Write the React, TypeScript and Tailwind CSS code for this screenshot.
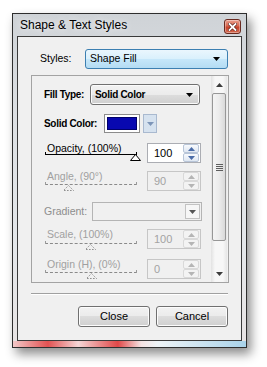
import React from "react";

const F = "font-['Liberation_Sans',Arial,sans-serif]";

function Tri({ up, color, w = 7, h = 4 }: { up?: boolean; color: string; w?: number; h?: number }) {
  return (
    <svg width={w} height={h} viewBox={`0 0 ${w} ${h}`}>
      <path d={up ? `M0 ${h} L${w / 2} 0 L${w} ${h} Z` : `M0 0 L${w / 2} ${h} L${w} 0 Z`} fill={color} />
    </svg>
  );
}

function SpinArrow({ up, disabled }: { up?: boolean; disabled?: boolean }) {
  return (
    <div
      className={`flex h-[9px] w-[16px] items-center justify-center rounded-[2px] border ${
        disabled ? "border-[#d9d9d9] bg-[#f3f3f3]" : "border-[#b8c5d8] bg-[linear-gradient(#f8fafd,#dfe7f2)]"
      }`}
    >
      <Tri up={up} color={disabled ? "#b5b5b5" : "#4a6ca8"} w={7} h={4} />
    </div>
  );
}

function SpinBox({ value, disabled }: { value: string; disabled?: boolean }) {
  return (
    <div
      className={`flex h-[20px] w-[54px] items-center border ${
        disabled ? "border-[#c6c6c6] bg-[#f0f0f0]" : "border-[#abadb3] bg-white"
      }`}
    >
      <div className={`flex-1 pl-[6px] text-[11px] leading-[11px] ${disabled ? "text-[#a3a3a3]" : "text-black"}`}>
        {value}
      </div>
      <div className="flex flex-col pr-[1px]">
        <SpinArrow up disabled={disabled} />
        <SpinArrow disabled={disabled} />
      </div>
    </div>
  );
}

function SliderLabel({
  label,
  disabled,
  thumbX,
  lineGap,
}: {
  label: string;
  disabled?: boolean;
  thumbX: number;
  lineGap: number;
}) {
  return (
    <div className="relative ml-[1px] w-[92px] shrink-0 self-start">
      <div className={`whitespace-nowrap pl-[2px] text-[10.5px] leading-[11px] ${disabled ? "text-[#a0a0a0]" : "text-black"}`}>
        {label}
      </div>
      <div style={{ height: lineGap }} />
      <div className={`h-0 border-b ${disabled ? "border-dashed border-[#8a8a8a]" : "border-solid border-black"}`} />
      <div className={`absolute bottom-0 left-0 h-[3px] w-px ${disabled ? "bg-[#9a9a9a]" : "bg-black"}`} />
      <div className={`absolute bottom-0 right-0 h-[3px] w-px ${disabled ? "bg-[#9a9a9a]" : "bg-black"}`} />
      <div className="absolute top-full" style={{ left: thumbX }}>
        {disabled ? (
          <svg width="11" height="7" viewBox="0 0 11 7">
            <path d="M5.5 0.5 L10.5 5.5 L0.5 5.5 Z" fill="none" stroke="#8a8a8a" strokeWidth="1" strokeDasharray="1.5 1.5" />
          </svg>
        ) : (
          <svg width="11" height="7" viewBox="0 0 11 7" className="-mt-px">
            <path d="M5.5 0.5 L10.5 6.5 L0.5 6.5 Z" fill="#fff" stroke="#000" strokeWidth="1" />
          </svg>
        )}
      </div>
    </div>
  );
}

function WinButton({ label }: { label: string }) {
  return (
    <div className="flex h-[21px] w-[72px] items-center justify-center rounded-[3px] border border-[#707070] bg-[linear-gradient(#f2f2f2_0%,#ebebeb_50%,#dddddd_50%,#cfcfcf_100%)] text-[11px] text-black shadow-[inset_0_0_0_1px_#fcfcfc]">
      {label}
    </div>
  );
}

function Scrollbar() {
  return (
    <div className="mr-[1px] flex w-[16px] flex-col bg-[linear-gradient(to_right,#e2e2e2,#f7f7f7_25%,#f7f7f7_75%,#e6e6e6)]">
      <div className="flex h-[17px] items-center justify-center">
        <Tri up color="#3c3c3c" w={7} h={4} />
      </div>
      <div className="mx-[1px] flex h-[148px] items-center justify-center rounded-[2px] border border-[#979797] bg-[linear-gradient(to_right,#f4f4f4,#ececec_50%,#d9d9d9)]">
        <div className="flex flex-col gap-[1px]">
          <div className="h-px w-[7px] bg-[#5e5e5e]" />
          <div className="h-px w-[7px] bg-[#5e5e5e]" />
          <div className="h-px w-[7px] bg-[#5e5e5e]" />
          <div className="h-px w-[7px] bg-[#5e5e5e]" />
        </div>
      </div>
      <div className="flex-1" />
      <div className="flex h-[17px] items-center justify-center">
        <Tri color="#3c3c3c" w={7} h={4} />
      </div>
    </div>
  );
}

const BOLD = "whitespace-nowrap text-[10px] font-bold tracking-[-0.3px] text-black";

export default function App() {
  return (
    <div className={`h-[367px] w-[267px] overflow-hidden bg-white pl-[12px] pt-[13px] ${F}`}>
      <div className="flex h-[335px] w-[235px] flex-col border border-[#2e2e2e] bg-[linear-gradient(to_bottom,#cfd3d7,#dde0e3_30%,#e4e7ea_70%,#e8e4e4)] shadow-[4px_6px_10px_rgba(0,0,0,0.45)]">
        {/* title bar */}
        <div className="flex h-[22px] items-start justify-between pl-[7px] pr-[5px]">
          <div className="mt-[4px] text-[12px] leading-[15px] text-black [text-shadow:0_0_6px_#ffffff]">
            Shape &amp; Text Styles
          </div>
          <div className="mt-[5px] flex h-[15px] w-[17px] items-center justify-center rounded-[3px] border border-[#6a2a20] bg-[linear-gradient(#eaa08f_0%,#d8674f_45%,#c7422b_55%,#d46a50_100%)] shadow-[inset_0_0_0_1px_rgba(255,255,255,0.35)]">
            <svg width="9" height="8" viewBox="0 0 9 8">
              <path d="M1.5 1 L7.5 7 M7.5 1 L1.5 7" stroke="#5a2018" strokeWidth="3.2" strokeLinecap="square" />
              <path d="M1.5 1 L7.5 7 M7.5 1 L1.5 7" stroke="#ffffff" strokeWidth="1.8" strokeLinecap="square" />
            </svg>
          </div>
        </div>
        {/* client */}
        <div className="mx-[4px] flex h-[305px] flex-col border border-[#3a3a3a] bg-[#f0f0f0]">
          {/* Styles row */}
          <div className="mt-[12px] flex h-[20px] items-center pl-[22px]">
            <div className="w-[45px] shrink-0 whitespace-nowrap text-[10.5px] text-black">Styles:</div>
            <div className="flex h-[20px] w-[143px] items-center justify-between rounded-[3px] border border-[#3c7fb1] bg-[linear-gradient(#eaf6fd_0%,#d9f0fc_50%,#c6e7fa_50%,#b4dcf3_100%)] pl-[4px] pr-[7px]">
              <span className="text-[10.5px] text-black">Shape Fill</span>
              <Tri color="#000" w={7} h={4} />
            </div>
          </div>
          {/* Panel */}
          <div className="ml-[13px] mt-[6px] flex h-[208px] w-[198px] border border-[#a3a3a3]">
            <div className="flex flex-1 flex-col overflow-hidden pl-[12px]">
              {/* Fill type */}
              <div className="mt-[8px] flex h-[21px] shrink-0 items-center">
                <div className={`w-[46px] shrink-0 ${BOLD}`}>Fill Type:</div>
                <div className="flex h-[21px] w-[110px] shrink-0 items-center justify-between rounded-[3px] border border-[#707070] bg-[linear-gradient(#f2f2f2_0%,#ebebeb_50%,#dddddd_50%,#cfcfcf_100%)] pl-[4px] pr-[6px] shadow-[inset_0_0_0_1px_#fbfbfb]">
                  <span className={BOLD}>Solid Color</span>
                  <Tri color="#000" w={7} h={4} />
                </div>
              </div>
              {/* Solid color */}
              <div className="mt-[9px] flex h-[19px] shrink-0 items-center">
                <div className={`w-[60px] shrink-0 ${BOLD}`}>Solid Color:</div>
                <div className="h-[19px] w-[36px] shrink-0 border border-[#8c8c8c] bg-white p-[2px]">
                  <div className="h-full w-full border border-[#00006a] bg-[#0808b0]" />
                </div>
                <div className="ml-[3px] flex h-[19px] w-[14px] shrink-0 items-center justify-center border border-[#a9b9cf] bg-[#d6e2ef]">
                  <Tri color="#7d95b8" w={7} h={4} />
                </div>
              </div>
              {/* Opacity */}
              <div className="mt-[10px] flex h-[20px] shrink-0 items-start">
                <SliderLabel label="Opacity, (100%)" thumbX={85} lineGap={0} />
                <div className="ml-[10px] shrink-0">
                  <SpinBox value="100" />
                </div>
              </div>
              {/* Angle */}
              <div className="mt-[8px] flex h-[20px] shrink-0 items-start">
                <SliderLabel label="Angle, (90°)" disabled thumbX={18} lineGap={2} />
                <div className="ml-[10px] shrink-0">
                  <SpinBox value="90" disabled />
                </div>
              </div>
              {/* Gradient */}
              <div className="mt-[11px] flex h-[19px] shrink-0 items-center">
                <div className="w-[48px] shrink-0 whitespace-nowrap text-[10.5px] text-[#8d8d8d]">Gradient:</div>
                <div className="flex h-[19px] w-[110px] shrink-0 items-center justify-end border border-[#b4b4b4] bg-[#f0f0f0] pr-[1px]">
                  <div className="flex h-[15px] w-[15px] items-center justify-center border border-[#c2c2c2] bg-[#f6f6f6]">
                    <Tri color="#555" w={7} h={4} />
                  </div>
                </div>
              </div>
              {/* Scale */}
              <div className="mt-[8px] flex h-[20px] shrink-0 items-start">
                <SliderLabel label="Scale, (100%)" disabled thumbX={40} lineGap={3} />
                <div className="ml-[10px] shrink-0">
                  <SpinBox value="100" disabled />
                </div>
              </div>
              {/* Origin */}
              <div className="mt-[10px] flex h-[20px] shrink-0 items-start">
                <SliderLabel label="Origin (H), (0%)" disabled thumbX={41} lineGap={2} />
                <div className="ml-[10px] shrink-0">
                  <SpinBox value="0" disabled />
                </div>
              </div>
            </div>
            <Scrollbar />
          </div>
          {/* separator */}
          <div className="ml-[13px] mt-[10px] h-px w-[197px] bg-[#a0a0a0]" />
          <div className="ml-[13px] h-px w-[197px] bg-white" />
          {/* buttons */}
          <div className="mt-[11px] flex justify-end gap-[6px] pr-[13px]">
            <WinButton label="Close" />
            <WinButton label="Cancel" />
          </div>
        </div>
        {/* bottom frame */}
        <div className="flex-1 bg-[linear-gradient(to_right,#f2c8c8_0%,#e25252_15%,#f5d6d6_28%,#e04848_45%,#f4e2e2_55%,#eef4f7_62%,#a9d3ea_100%)]" />
      </div>
    </div>
  );
}
